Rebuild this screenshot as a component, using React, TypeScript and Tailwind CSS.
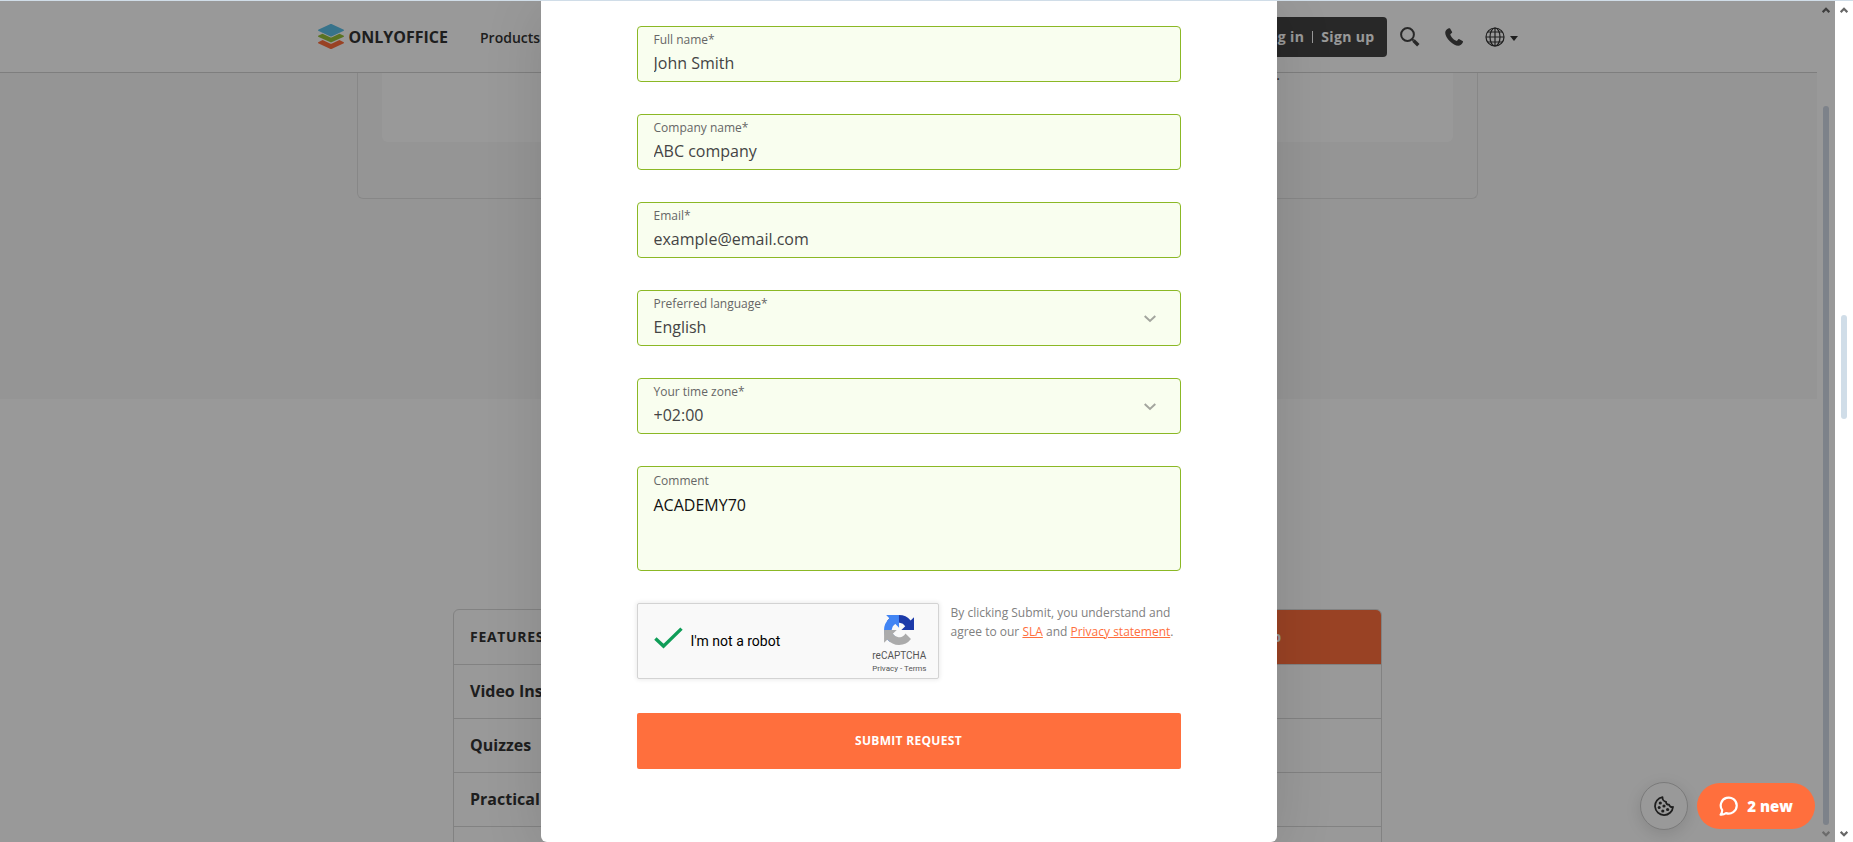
import type { ReactNode } from "react";

const features = ["Video Instructions", "Quizzes", "Practical exercises", ""];

const LogoMark = () =>
  <svg width="26" height="26" viewBox="0 0 26 26" aria-hidden="true">
    <path fill="#ff6f3d" d="M12 24.7.7 19.4c-.9-.4-.9-1.1 0-1.5l3.9-1.8 7.4 3.4c.8.4 1.3.4 2 0l7.4-3.4 3.9 1.8c.9.4.9 1.1 0 1.5L14 24.7c-.7.3-1.3.3-2 0z" />
    <path fill="#95c038" d="M12 18.1.7 12.9c-.9-.4-.9-1.1 0-1.5l3.8-1.7 7.5 3.5c.8.4 1.3.4 2 0l7.5-3.5 3.8 1.7c.9.4.9 1.1 0 1.5L14 18.1c-.7.4-1.3.4-2 0z" />
    <path fill="#5dc0e8" d="M12 12.2.7 6.9c-.9-.4-.9-1.1 0-1.5L12 .3c.7-.4 1.3-.4 2 0l11.3 5.1c.9.4.9 1.1 0 1.5L14 12.2c-.7.4-1.3.4-2 0z" />
  </svg>

const SearchIcon = () =>
  <svg width="20" height="20" viewBox="0 0 20 20" fill="none" stroke="#444" aria-hidden="true">
    <circle cx="7.5" cy="7.5" r="6.4" strokeWidth="2" />
    <path d="m12 12 1.5 1.5" strokeWidth="2" />
    <path d="m13.5 13.5 4.8 4.8" strokeWidth="3.4" />
  </svg>

const PhoneIcon = () =>
  <svg width="18" height="18" viewBox="0 0 18 18" fill="#444" aria-hidden="true">
    <path d="M3.8.3c.5-.3 1-.2 1.3.3l1.9 3.2c.3.5.1 1-.3 1.3L5.3 6.2c.4 2.6 3.6 6 6.6 6.7l1.2-1.4c.4-.4.9-.5 1.3-.3l3.2 1.9c.5.3.5.8.3 1.2-1 2.2-2.7 3.5-4.6 3.5C8.2 17.8.2 10 .2 4.7.2 2.7 1.7 1.1 3.8.3z" />
  </svg>

const GlobeIcon = () =>
  <svg width="20" height="20" viewBox="0 0 20 20" fill="none" stroke="#333" strokeWidth="1.2" aria-hidden="true">
    <circle cx="10" cy="10" r="9" />
    <ellipse cx="10" cy="10" rx="5" ry="9" />
    <path d="M10 1v18M1 10h18M2.6 5h14.8M2.6 15h14.8" />
  </svg>

const CookieIcon = () =>
  <svg width="20" height="20" viewBox="0 0 20 20" aria-hidden="true">
    <path fill="none" stroke="#333" strokeWidth="1.8" strokeLinejoin="round" d="M8.5 1.2A9 9 0 1 0 19 11c-2 .4-3.6-.6-3.9-2.4-1.9.3-3.3-1-3-2.8C9.9 5.7 8.4 3.5 8.5 1.2z" />
    <g fill="#333">
      <circle cx="6.3" cy="7" r="1.6" />
      <circle cx="10" cy="10" r="1.6" />
      <circle cx="5.2" cy="11.5" r="1.5" />
      <circle cx="8.8" cy="15" r="1.6" />
      <circle cx="13.6" cy="13.5" r="1.6" />
    </g>
  </svg>

const ChatIcon = () =>
  <svg width="20" height="20" viewBox="0 0 20 20" fill="none" stroke="#fff" strokeWidth="2.2" strokeLinejoin="round" aria-hidden="true">
    <path d="M3.2 14.2A8 8 0 1 1 7 17.1c-1.6 1.2-3.4 1.7-5.4 1.5 1-1.2 1.6-2.7 1.6-4.4z" />
  </svg>

const RecaptchaLogo = () =>
  <svg width="30" height="30" viewBox="0 0 64 64" aria-hidden="true">
    <path fill="#1c3aa9" d="M64 31.96a31 31 0 0 0-.02-1.38V4.61l-7.18 7.18A31.93 31.93 0 0 0 32.09.1a31.9 31.9 0 0 0-25.5 12.67l11.77 11.89a15.6 15.6 0 0 1 4.77-5.35c2.06-1.6 4.97-2.92 9-2.92.49 0 .86.06 1.14.16a15.58 15.58 0 0 1 12.03 7.25l-8.33 8.33L64 31.96" />
    <path fill="#4285f4" d="M31.86.1a31 31 0 0 0-1.37.02H4.6l7.18 7.18A31.93 31.93 0 0 0 .1 32.01a31.9 31.9 0 0 0 12.67 25.5l11.89-11.77a15.6 15.6 0 0 1-5.35-4.77c-1.6-2.06-2.92-4.97-2.92-9 0-.49.06-.86.16-1.14a15.58 15.58 0 0 1 7.25-12.03l8.33 8.33L31.86.1" />
    <path fill="#ababab" d="M.13 32.01q0 .7.03 1.37v25.98l7.18-7.18a31.93 31.93 0 0 0 24.7 11.69 31.9 31.9 0 0 0 25.5-12.67L45.77 39.31a15.6 15.6 0 0 1-4.77 5.35c-2.06 1.6-4.97 2.92-9 2.92-.49 0-.86-.06-1.14-.16a15.58 15.58 0 0 1-12.03-7.25l8.33-8.33L.13 32.01" />
  </svg>

const Arrow = ({ down, className }: { down?: boolean; className: string }) =>
  <svg width="8" height="6" viewBox="0 0 8 6" fill="none" stroke="currentColor" strokeWidth="2.2" className={className} aria-hidden="true">
    <path d={down ? "M.7.9 4 4.2 7.3.9" : "M.7 5.1 4 1.8 7.3 5.1"} />
  </svg>

interface FieldProps {
  id: string;
  label: string;
  children: ReactNode;
}

const Field = ({ id, label, children }: FieldProps) =>
  <div className="relative flex flex-col gap-[3px] h-14 pt-[5px] border border-[#8bb825] rounded bg-[#f9feef]">
    <label htmlFor={id} className="px-4 text-xs text-[#666]">{label}</label>
    {children}
  </div>

const TextField = ({ id, label, value, type = "text" }: { id: string; label: string; value: string; type?: string }) =>
  <Field id={id} label={label}>
    <input id={id} type={type} defaultValue={value} className="w-full px-4 text-base text-[#444] bg-transparent outline-none" />
  </Field>

const SelectField = ({ id, label, value }: { id: string; label: string; value: string }) =>
  <Field id={id} label={label}>
    <select id={id} defaultValue={value} className="w-full px-4 text-base text-[#444] bg-transparent appearance-none outline-none">
      <option>{value}</option>
    </select>
    <svg width="12" height="8" viewBox="0 0 12 8" fill="none" stroke="#a3a59e" strokeWidth="2" className="absolute right-6 top-6 pointer-events-none" aria-hidden="true">
      <path d="m.7 1 5.3 5 5.3-5" />
    </svg>
  </Field>

const Header = () =>
  <header className="h-18 shrink-0 bg-white border-b border-[#d3d3d3]">
    <div className="flex items-center h-full max-w-[1200px] mx-auto">
      <a href="#" className="flex items-center gap-[5px]">
        <LogoMark />
        <span className="text-base font-bold text-[#333]">ONLYOFFICE</span>
      </a>
      <nav className="ml-8">
        <a href="#" className="text-sm font-semibold text-[#333]">Products</a>
      </nav>
      <div className="flex items-center h-10 ml-auto px-3 rounded-sm bg-[#444] text-sm font-bold tracking-wide text-white">
        <a href="#">Log in</a>
        <span className="w-px h-3 mx-2 bg-white"></span>
        <a href="#">Sign up</a>
      </div>
      <button type="button" aria-label="Search" className="ml-[13px]"><SearchIcon /></button>
      <a href="#" aria-label="Call us" className="ml-[25px]"><PhoneIcon /></a>
      <button type="button" aria-label="Language" className="flex items-center gap-[5px] ml-[22px]">
        <GlobeIcon />
        <svg width="8" height="5" viewBox="0 0 8 5" fill="#333" className="mt-1" aria-hidden="true"><path d="M0 0h8L4 5z" /></svg>
      </button>
    </div>
  </header>

const FeatureTable = () =>
  <div className="w-full max-w-[929px] shrink-0 mx-auto mt-[210px] border border-[#d9d9d9] rounded-md overflow-hidden">
    <table className="w-full text-left text-[#333]">
      <thead>
        <tr className="h-[54px] border-b border-[#d9d9d9]">
          <th className="pl-4 text-sm font-bold tracking-wider">FEATURES</th>
          <th className="w-[310px] pr-[100px] bg-[#ff6f3d] text-sm font-bold text-right text-white">Workshop</th>
        </tr>
      </thead>
      <tbody>
        {features.map((name) =>
          <tr key={name} className="h-[54px] border-b border-[#d9d9d9]">
            <td className="pl-4 text-base font-bold">{name}</td>
            <td></td>
          </tr>
        )}
      </tbody>
    </table>
  </div>

const RequestForm = () =>
  <form className="flex flex-col gap-8 w-full max-w-[736px] h-full px-24 pt-[25px] rounded-b-md bg-white shadow-[0_8px_60px_rgba(0,0,0,0.12)]">
    <TextField id="name" label="Full name*" value="John Smith" />
    <TextField id="company" label="Company name*" value="ABC company" />
    <TextField id="email" label="Email*" value="example@email.com" type="email" />
    <SelectField id="language" label="Preferred language*" value="English" />
    <SelectField id="timezone" label="Your time zone*" value="+02:00" />
    <div className="flex flex-col gap-1 h-[105px] shrink-0 pt-1.5 border border-[#8bb825] rounded bg-[#f9feef]">
      <label htmlFor="comment" className="px-4 text-xs text-[#666]">Comment</label>
      <textarea id="comment" defaultValue="ACADEMY70" className="grow px-4 text-base text-[#111] bg-transparent outline-none resize-none" />
    </div>
    <div className="flex items-start gap-3 h-[78px] shrink-0">
      <div className="flex items-center w-[302px] h-[76px] shrink-0 pl-4 pr-[11px] border border-[#d3d3d3] rounded-xs bg-[#f9f9f9] shadow-[0_0_4px_1px_rgba(0,0,0,0.08)] font-[Roboto,sans-serif]">
        <label className="flex items-center gap-2 text-sm text-black">
          <input type="checkbox" defaultChecked className="sr-only" />
          <svg width="29" height="22" viewBox="0 0 29 22" fill="none" stroke="#0f9d58" strokeWidth="3.4" className="-mt-1.5" aria-hidden="true">
            <path d="m1.4 11.5 8.1 7.6L27.5 1.6" />
          </svg>
          I'm not a robot
        </label>
        <div className="flex flex-col items-center ml-auto pt-2 text-[#555]">
          <RecaptchaLogo />
          <span className="mt-1 text-[10px] leading-[14px]">reCAPTCHA</span>
          <span className="text-[8px] leading-3"><a href="#">Privacy</a> - <a href="#">Terms</a></span>
        </div>
      </div>
      <p className="text-xs leading-[19px] text-[#808080]">
        By clicking Submit, you understand and agree to our <a href="#" className="text-[#ff6f3d] underline">SLA</a> and <a href="#" className="text-[#ff6f3d] underline">Privacy statement</a>.
      </p>
    </div>
    <button type="submit" className="h-14 shrink-0 rounded-xs bg-[#ff6f3d] text-xs font-bold tracking-wide text-white">SUBMIT REQUEST</button>
  </form>

export default function App() {
  return (
    <div className="flex h-screen overflow-hidden border-t border-[#d0dde8] bg-white font-['Open_Sans',sans-serif]">
      <div className="relative flex-1 overflow-hidden">
        <div className="flex flex-col h-full">
          <Header />
          <section className="h-[326px] shrink-0 bg-[#f9f9f9]">
            <div className="h-[126px] max-w-[1121px] mx-auto px-6 border border-t-0 border-[#e2e2e2] rounded-b-md">
              <div className="h-[69px] pr-[173px] rounded-b-md bg-white text-right text-sm leading-1 text-[#333]">.</div>
            </div>
          </section>
          <FeatureTable />
        </div>

        <div className="absolute right-[147px] bottom-3 flex items-center justify-center size-12 rounded-full border border-[#ccc] bg-white shadow-[0_4px_16px_rgba(0,0,0,0.12)]">
          <button type="button" aria-label="Cookie settings"><CookieIcon /></button>
        </div>

        <div className="absolute inset-0 flex bg-black/40">
          <div className="flex flex-1 justify-center">
            <RequestForm />
          </div>
          <div className="flex flex-col items-center w-[18px] pt-1.5 pb-[5px] bg-[#999]">
            <Arrow className="shrink-0 text-[#3d3d3d]" />
            <div className="grow w-1.5 mt-[93px] mb-1.5 rounded-full bg-[#7d828a]"></div>
            <Arrow down className="shrink-0 text-[#6b6b6b]" />
          </div>
        </div>

        <button type="button" className="absolute right-5 bottom-[13px] flex items-center gap-2 h-[46px] px-[22px] rounded-full bg-[#ff6f3d] text-[15px] font-extrabold text-white">
          <ChatIcon />
          2 new
        </button>
      </div>

      <div className="flex flex-col items-center w-[18px] pt-1.5 pb-[5px] bg-white">
        <Arrow className="shrink-0 text-[#666]" />
        <div className="w-1.5 h-[104px] mt-[302px] rounded-full bg-[#d0dde8]"></div>
        <Arrow down className="shrink-0 mt-auto text-[#666]" />
      </div>
    </div>
  );
}
